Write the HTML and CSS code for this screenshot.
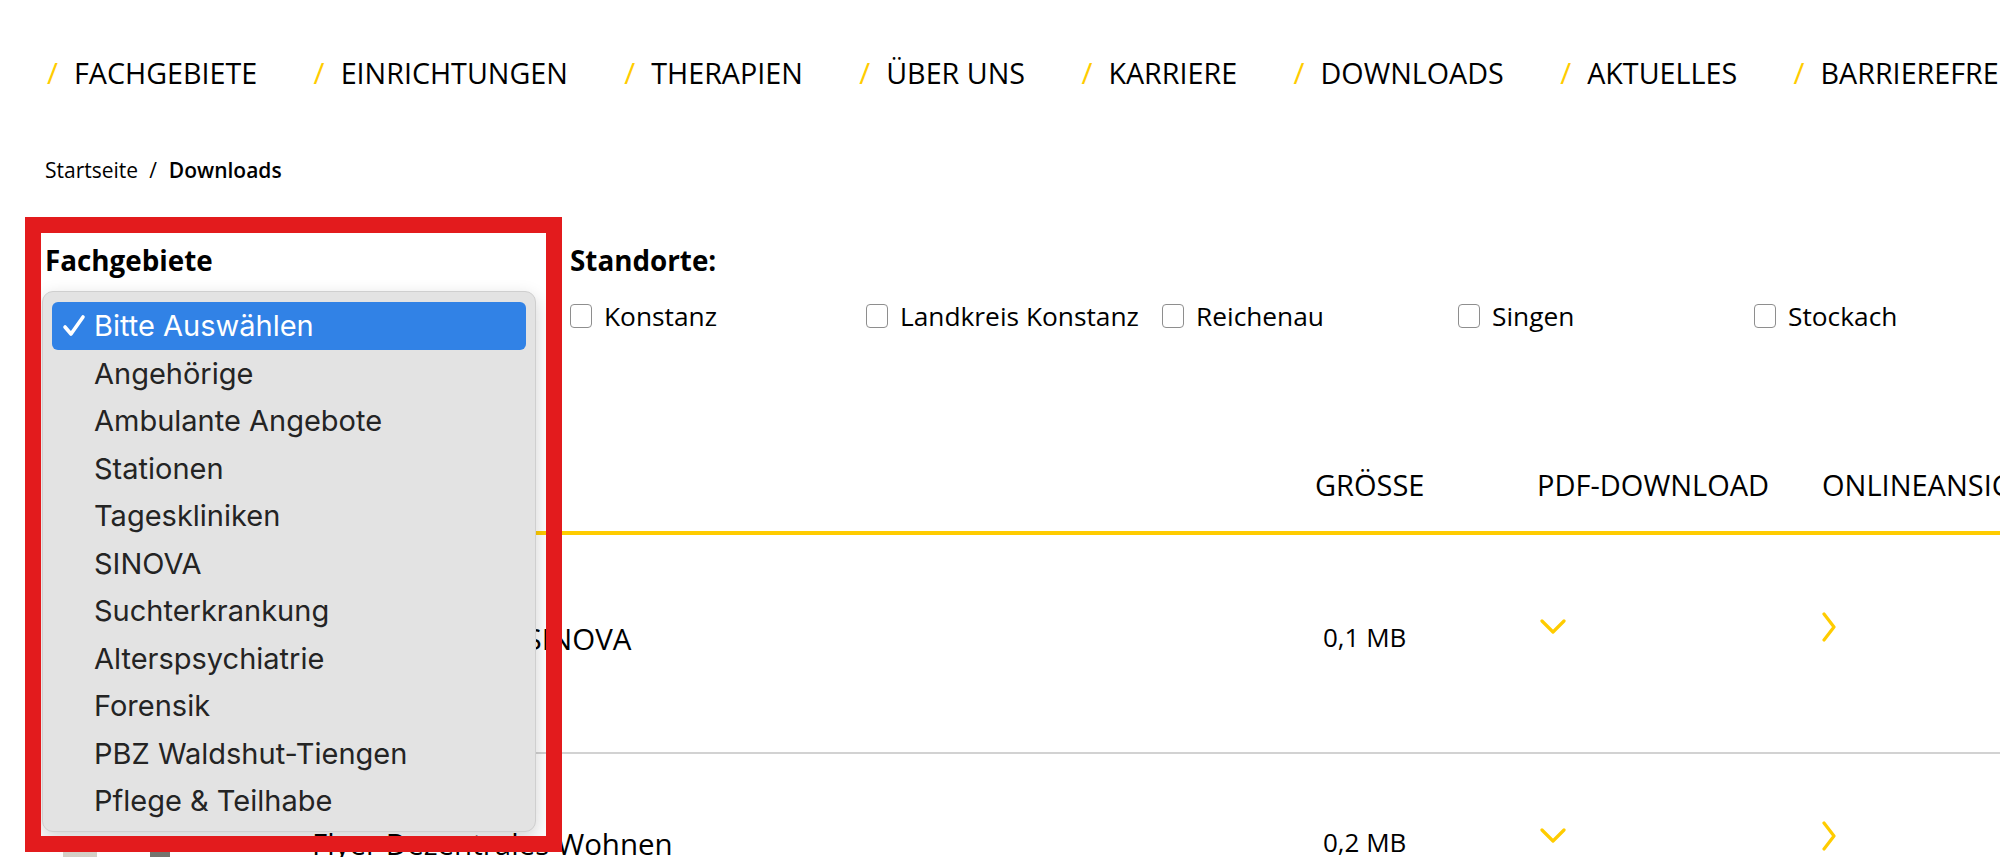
FILE: index.html
```html
<!DOCTYPE html>
<html lang="de">
<head>
<meta charset="utf-8">
<title>Downloads</title>
<link rel="stylesheet" href="styles.css">
</head>
<body>
<div class="page">
  <nav class="mainnav">
    <a class="navitem"><span class="slash">/</span>Fachgebiete</a>
    <a class="navitem"><span class="slash">/</span>Einrichtungen</a>
    <a class="navitem"><span class="slash">/</span>Therapien</a>
    <a class="navitem"><span class="slash">/</span>Über uns</a>
    <a class="navitem"><span class="slash">/</span>Karriere</a>
    <a class="navitem"><span class="slash">/</span>Downloads</a>
    <a class="navitem"><span class="slash">/</span>Aktuelles</a>
    <a class="navitem"><span class="slash">/</span>Barrierefreiheit</a>
  </nav>

  <div class="breadcrumb"><span>Startseite</span><span class="sep">/</span><strong>Downloads</strong></div>

  <section class="filters">
    <div class="filter-fach">
      <div class="flabel">Fachgebiete</div>
    </div>
    <div class="filter-standorte">
      <div class="flabel">Standorte:</div>
      <div class="checks">
        <label class="check"><span class="box"></span>Konstanz</label>
        <label class="check"><span class="box"></span>Landkreis Konstanz</label>
        <label class="check"><span class="box"></span>Reichenau</label>
        <label class="check"><span class="box"></span>Singen</label>
        <label class="check"><span class="box"></span>Stockach</label>
      </div>
    </div>
  </section>

  <section class="downloads">
    <div class="thead">
      <div></div>
      <div>Titel</div>
      <div>Grösse</div>
      <div>PDF-Download</div>
      <div>Onlineansicht</div>
    </div>
    <div class="row row-first">
      <div class="thumb thumb-tall"></div>
      <div class="title">Flyer Angebote SINOVA</div>
      <div class="size">0,1 MB</div>
      <div class="icon"><svg width="26" height="16" viewBox="0 0 26 16"><polyline points="2,2 13,13 24,2" fill="none" stroke="#ffcc00" stroke-width="3.2" stroke-linecap="round" stroke-linejoin="round"/></svg></div>
      <div class="icon"><svg width="14" height="30" viewBox="0 0 14 30"><polyline points="2,2 12,15 2,28" fill="none" stroke="#ffcc00" stroke-width="3.2" stroke-linecap="round" stroke-linejoin="round"/></svg></div>
    </div>
    <div class="row row-second">
      <div class="thumb thumb-low"><span class="pic pic-a"></span><span class="pic pic-b"></span></div>
      <div class="title">Flyer Dezentrales Wohnen</div>
      <div class="size">0,2 MB</div>
      <div class="icon"><svg width="26" height="16" viewBox="0 0 26 16"><polyline points="2,2 13,13 24,2" fill="none" stroke="#ffcc00" stroke-width="3.2" stroke-linecap="round" stroke-linejoin="round"/></svg></div>
      <div class="icon"><svg width="14" height="30" viewBox="0 0 14 30"><polyline points="2,2 12,15 2,28" fill="none" stroke="#ffcc00" stroke-width="3.2" stroke-linecap="round" stroke-linejoin="round"/></svg></div>
    </div>
  </section>

  <div class="popup">
    <div class="opt selected"><svg class="checkmark" width="24" height="24" viewBox="0 0 24 24"><polyline points="3,13 9,20 21,3" fill="none" stroke="#ffffff" stroke-width="3.6" stroke-linecap="round" stroke-linejoin="round"/></svg>Bitte Auswählen</div>
    <div class="opt">Angehörige</div>
    <div class="opt">Ambulante Angebote</div>
    <div class="opt">Stationen</div>
    <div class="opt">Tageskliniken</div>
    <div class="opt">SINOVA</div>
    <div class="opt">Suchterkrankung</div>
    <div class="opt">Alterspsychiatrie</div>
    <div class="opt">Forensik</div>
    <div class="opt">PBZ Waldshut-Tiengen</div>
    <div class="opt">Pflege &amp; Teilhabe</div>
  </div>

  <div class="annotation"></div>
</div>
</body>
</html>
```

FILE: styles.css
```css
html, body {
  margin: 0;
  padding: 0;
  overflow: hidden;
  background: #ffffff;
}

body {
  font-family: "Open Sans", "Noto Sans", sans-serif;
  color: #000000;
}

.page {
  position: relative;
  width: 2300px;
  height: 857px;
  padding-left: 45px;
  box-sizing: border-box;
}

/* main navigation */
.mainnav {
  display: flex;
  gap: 56.4px;
  padding-top: 53px;
  padding-left: 2px;
  white-space: nowrap;
}

.navitem {
  font-size: 28.7px;
  line-height: 40px;
  text-transform: uppercase;
  color: #000;
}

.slash {
  color: #ffcc00;
  margin-right: 16px;
  font-size: 30px;
}

/* breadcrumb */
.breadcrumb {
  margin-top: 63px;
  font-size: 21px;
  line-height: 28px;
}

.breadcrumb .sep {
  margin: 0 12px 0 11px;
}

.breadcrumb strong {
  font-weight: 600;
}

/* filters */
.filters {
  display: flex;
  margin-top: 58px;
}

.filter-fach {
  width: 525px;
}

.flabel {
  font-size: 27.8px;
  line-height: 36px;
  font-weight: 700;
}

.checks {
  display: grid;
  grid-template-columns: repeat(5, 296px);
  margin-top: 20px;
}

.check {
  display: flex;
  align-items: center;
  gap: 12px;
  font-size: 26.3px;
  line-height: 36px;
  white-space: nowrap;
}

.box {
  width: 22px;
  height: 24px;
  box-sizing: border-box;
  border: 1.5px solid #8e8e8e;
  border-radius: 4px;
  background: #fff;
}

/* downloads table */
.downloads {
  margin-top: 131px;
}

.thead,
.row {
  display: grid;
  grid-template-columns: 267px 1003px 222px 285px 300px;
}

.thead {
  font-size: 29px;
  line-height: 40px;
  text-transform: uppercase;
  padding-bottom: 26px;
  border-bottom: 4px solid #ffcc00;
  white-space: nowrap;
}

.row {
  align-items: center;
  border-bottom: 2px solid #d2d2d2;
}

.row-first {
  padding: 20px 0;
}

.title {
  font-size: 29.5px;
  line-height: 36px;
  white-space: nowrap;
  margin-bottom: 10px;
}

.size {
  font-size: 26px;
  line-height: 36px;
  padding-left: 8px;
  margin-bottom: 14px;
  font-weight: 500;
}

.icon {
  display: flex;
  margin-bottom: 34px;
}

.row-second .icon {
  margin-bottom: 26px;
}

.row .icon:nth-child(4) {
  padding-left: 3px;
}

.thumb {
  width: 140px;
  margin-left: 15px;
  background: #f2f2f2;
}

.thumb-tall {
  height: 177px;
}

.thumb-low {
  height: 100px;
  margin-top: 90px;
  position: relative;
  background: #ffffff;
}

.pic {
  position: absolute;
  top: 0;
  height: 100px;
}

.pic-a {
  left: 3px;
  width: 34px;
  background: linear-gradient(180deg, #d8d4cc, #b9b2a4);
}

.pic-b {
  left: 90px;
  width: 20px;
  background: linear-gradient(180deg, #7c7a70, #3f4a63);
}

/* native-looking select popup */
.popup {
  position: absolute;
  left: 42px;
  top: 291px;
  width: 494px;
  height: 541px;
  box-sizing: border-box;
  padding: 10px 9px;
  background: #e3e3e3;
  border: 1px solid #cfcfcf;
  border-radius: 11px;
  box-shadow: 0 6px 18px rgba(0, 0, 0, 0.18);
  font-family: "Inter", "Liberation Sans", sans-serif;
}

.opt {
  position: relative;
  height: 47.5px;
  line-height: 47.5px;
  padding-left: 42px;
  font-size: 29px;
  color: #242424;
  border-radius: 6px;
  white-space: nowrap;
}

.opt.selected {
  background: #3182e6;
  color: #ffffff;
}

.checkmark {
  position: absolute;
  left: 10px;
  top: 12px;
}

/* red annotation frame */
.annotation {
  position: absolute;
  left: 25px;
  top: 217px;
  width: 537px;
  height: 635px;
  box-sizing: border-box;
  border: 16px solid #e31b1d;
  pointer-events: none;
}
```
